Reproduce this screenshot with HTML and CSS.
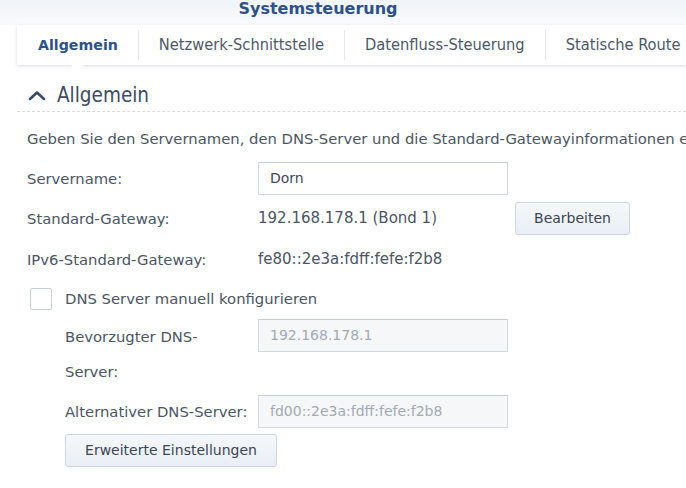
FILE: index.html
```html
<!DOCTYPE html>
<html lang="de">
<head>
<meta charset="utf-8">
<title>Systemsteuerung</title>
<link rel="stylesheet" href="styles.css">
</head>
<body>
<div class="titlebar"><span class="title">Systemsteuerung</span></div>
<nav class="tabs">
  <div class="tab active">Allgemein</div>
  <div class="tab">Netzwerk-Schnittstelle</div>
  <div class="tab">Datenfluss-Steuerung</div>
  <div class="tab">Statische Route</div>
</nav>
<main class="content">
  <h2 class="section-head">
    <svg class="chev" width="18" height="11" viewBox="0 0 18 11"><path d="M2 9 L9 2.5 L16 9" fill="none" stroke="#3d4c62" stroke-width="2.6" stroke-linecap="round" stroke-linejoin="round"/></svg>
    <span>Allgemein</span>
  </h2>
  <div class="body">
    <p class="desc">Geben Sie den Servernamen, den DNS-Server und die Standard-Gatewayinformationen ein.</p>
    <div class="row r1">
      <div class="label">Servername:</div>
      <div class="input">Dorn</div>
    </div>
    <div class="row r2">
      <div class="label">Standard-Gateway:</div>
      <div class="value">192.168.178.1 (Bond 1)</div>
      <div class="btn btn-edit">Bearbeiten</div>
    </div>
    <div class="row r3">
      <div class="label">IPv6-Standard-Gateway:</div>
      <div class="value">fe80::2e3a:fdff:fefe:f2b8</div>
    </div>
    <div class="row r4">
      <span class="checkbox"></span>
      <span class="cb-label">DNS Server manuell konfigurieren</span>
    </div>
    <div class="sub">
      <div class="row r5">
        <div class="label sublabel tall">Bevorzugter DNS-Server:</div>
        <div class="input disabled">192.168.178.1</div>
      </div>
      <div class="row r6">
        <div class="label sublabel">Alternativer DNS-Server:</div>
        <div class="input disabled">fd00::2e3a:fdff:fefe:f2b8</div>
      </div>
      <div class="btn btn-adv">Erweiterte Einstellungen</div>
    </div>
  </div>
</main>
</body>
</html>
```
FILE: styles.css
```css
html, body {
  margin: 0;
  padding: 0;
  background: #ffffff;
  font-family: "DejaVu Sans", Verdana, sans-serif;
  color: #4b5563;
  overflow: hidden;
}

.titlebar {
  height: 25px;
  background: linear-gradient(#f1f4f8, #f8fafc);
  text-align: center;
  padding-right: 50px;
  box-sizing: border-box;
}

.title {
  display: inline-block;
  font-weight: bold;
  font-size: 16px;
  line-height: 16px;
  color: #2e5288;
  position: relative;
  top: -1px;
}

.tabs {
  margin-left: 17px;
  height: 40px;
  background: #ffffff;
  display: flex;
  align-items: center;
  box-shadow: 0 1px 3px rgba(40, 60, 90, 0.18);
  position: relative;
  white-space: nowrap;
}

.tab {
  padding: 0 20px 0 20px;
  font-family: "DejaVu Sans Condensed", "DejaVu Sans", sans-serif;
  font-size: 16.3px;
  color: #4d5867;
  border-left: 1px solid #e4e8ed;
  line-height: 30px;
}

.tab.active {
  padding-left: 21px;
  border-left: none;
  font-weight: bold;
  font-family: "DejaVu Sans", sans-serif;
  font-size: 14.2px;
  color: #2e5288;
}

.tab.active::after {
  content: "";
  position: absolute;
  left: 56px;
  bottom: -6px;
  width: 9px;
  height: 9px;
  background: #ffffff;
  transform: rotate(45deg);
}

.content {
  margin-left: 17px;
}

.section-head {
  margin: 0;
  padding: 17px 0 3px 11px;
  height: 26px;
  display: flex;
  align-items: center;
  gap: 11px;
  font-weight: normal;
  font-family: "DejaVu Sans Condensed", "DejaVu Sans", sans-serif;
  font-size: 20.5px;
  color: #3d4c62;
  border-bottom: 1px dashed #d8dde3;
}

.chev {
  display: block;
}

.body {
  padding-left: 10px;
}

.desc {
  margin: 17px 0 0 0;
  font-size: 14.8px;
  line-height: 20px;
  white-space: nowrap;
}

.row {
  display: flex;
  align-items: center;
  font-size: 14.8px;
}

.label {
  width: 231px;
  flex: none;
  line-height: 33px;
}

.r1 { margin-top: 13px; }
.r2 { margin-top: 7px; }
.r3 { margin-top: 8px; }
.r4 { margin-top: 6px; height: 33px; }

.input {
  height: 31px;
  border: 1px solid #d3d9e0;
  border-top-color: #c6cdd6;
  padding-left: 11px;
  box-sizing: content-box;
  line-height: 31px;
  font-size: 14px;
  color: #3f4854;
  background: #ffffff;
  width: 237px;
}

.input.disabled {
  background: #f5f7f9;
  color: #a3aab3;
}

.value {
  width: 257px;
  flex: none;
  font-size: 15px;
  line-height: 33px;
  color: #4b5563;
}

.btn {
  height: 31px;
  border: 1px solid #cdd6df;
  border-radius: 3px;
  background: linear-gradient(#f5f8fb, #e9eff5);
  color: #3b4553;
  font-size: 14px;
  line-height: 31px;
  text-align: center;
  box-sizing: content-box;
}

.btn-edit {
  width: 113px;
}

.checkbox {
  width: 20px;
  height: 20px;
  border: 1px solid #c9cfd6;
  border-radius: 2px;
  background: #ffffff;
  margin-left: 3px;
  flex: none;
}

.cb-label {
  margin-left: 13px;
}

.sub {
  padding-left: 38px;
}

.sublabel {
  width: 193px;
}

.tall {
  line-height: 35px;
  align-self: flex-start;
}

.r5 {
  margin-top: 4px;
  align-items: flex-start;
}

.r5 .tall {
  width: 180px;
  margin-right: 13px;
}

.r6 { margin-top: 6px; }

.btn-adv {
  margin-top: 6px;
  width: 210px;
}
```
